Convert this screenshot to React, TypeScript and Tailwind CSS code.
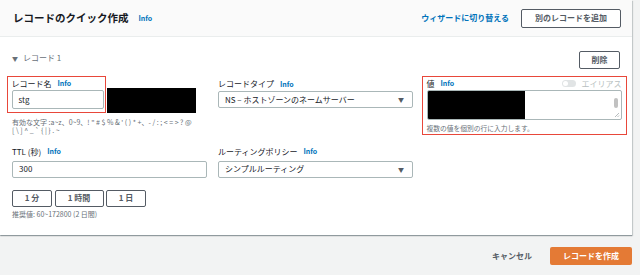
const font = { fontFamily: '"Noto Sans CJK JP", "Noto Sans", sans-serif' };

function Info() {
	return <span className="ml-[6px] text-[7px] font-bold text-[#0073bb]">Info</span>;
}

function SelectBox({ value }: { value: string }) {
	return (
		<div className="flex h-[17px] items-center justify-between rounded-[2px] border border-[#aab7b8] bg-white pl-[6px] pr-[8px]">
			<span className="text-[8px] text-[#16191f]">{value}</span>
			<span className="text-[6px] text-[#545b64]">▼</span>
		</div>
	);
}

function SmallButton({ label, w }: { label: string; w: string }) {
	return (
		<button
			className={`${w} h-[17px] rounded-[2px] border border-[#545b64] bg-white text-[8px] font-bold text-[#545b64]`}
		>
			{label}
		</button>
	);
}

export default function App() {
	return (
		<div style={font} className="h-[275px] w-[640px] overflow-hidden bg-[#f2f3f3]">
			<div className="w-[632px] bg-white shadow-[0_1px_1px_0_rgba(0,28,36,0.3),1px_1px_1px_0_rgba(0,28,36,0.15)]">
				{/* header */}
				<div className="flex h-[37px] items-center justify-between border-b border-[#eaeded] bg-[#fafafa] pl-[13px] pr-[11px]">
					<div className="flex items-center">
						<span className="text-[10.5px] font-bold text-[#16191f]">レコードのクイック作成</span>
						<span className="ml-[10px] text-[7px] font-bold text-[#0073bb]">Info</span>
					</div>
					<div className="flex items-center">
						<span className="text-[8px] font-bold text-[#0073bb]">ウィザードに切り替える</span>
						<button className="ml-[12px] h-[19px] w-[100px] rounded-[2px] border border-[#545b64] bg-white text-[8px] font-bold text-[#545b64]">
							別のレコードを追加
						</button>
					</div>
				</div>

				<div className="pb-[16px] pl-[12px] pr-[5px] pt-[14px]">
					{/* record row */}
					<div className="flex items-start justify-between pr-[7px]">
						<div className="mt-[1px] flex items-center text-[8px] text-[#687078]">
							<span className="text-[6px]">▼</span>
							<span className="ml-[5px]">レコード 1</span>
						</div>
						<button className="h-[18px] w-[41px] rounded-[2px] border border-[#545b64] bg-white text-[8px] font-bold text-[#545b64]">
							削除
						</button>
					</div>

					{/* fields row */}
					<div className="mt-[7px] flex items-start">
						<div className="-ml-[5px] w-[200px]">
							<div className="flex items-end">
								<div className="w-[99px] border-[1.5px] border-[#e8473a] pb-[3px] pl-[3.5px] pr-[1.5px]">
									<div className="flex h-[13px] items-center text-[8px] text-[#16191f]">
										レコード名
										<Info />
									</div>
									<div className="flex h-[19px] items-center rounded-[2px] border border-[#aab7b8] bg-white px-[6px] text-[8px] text-[#16191f]">
										stg
									</div>
								</div>
								<div className="ml-[1px] h-[25px] w-[89px] bg-black" />
							</div>
							<p className="ml-[5px] mt-[4.5px] whitespace-nowrap text-[7px] leading-[8px] text-[#687078]">
								有効な文字 :a~z、0~9、! " # $ % &amp; ' ( ) * +、- / : ; &lt; = &gt; ? @
								<br />[ \ ] ^ _ ` {"{"} | {"}"} . ~
							</p>
						</div>

						<div className="ml-[11px] w-[195px] pt-[1.5px]">
							<div className="flex h-[13px] items-center text-[8px] text-[#16191f]">
								レコードタイプ
								<Info />
							</div>
							<div className="mt-[0.5px]">
								<SelectBox value="NS – ホストゾーンのネームサーバー" />
							</div>
						</div>

						<div className="ml-[9px] w-[205px] border-[1.5px] border-[#e8473a] pb-[1.5px] pl-[3.5px] pr-[4.5px]">
							<div className="flex h-[13px] items-center justify-between text-[8px]">
								<div className="flex items-center text-[#16191f]">
									値
									<Info />
								</div>
								<div className="flex items-center">
									<div className="flex h-[7px] w-[14px] items-center rounded-full bg-[#e1e4e5] px-[1px]">
										<div className="h-[5px] w-[5px] rounded-full bg-white" />
									</div>
									<span className="ml-[6px] text-[#b8bfc1]">エイリアス</span>
								</div>
							</div>
							<div className="relative flex h-[30px] overflow-hidden rounded-[2px] border border-[#aab7b8] bg-white">
								<div className="h-full w-[97px] bg-black" />
								<div className="absolute right-[3px] top-[7px] h-[10px] w-[4px] rounded-full bg-[#c1c1c1]" />
								<svg className="absolute bottom-[1px] right-[1px]" width="6" height="6" viewBox="0 0 6 6">
									<path d="M5 1 L1 5 M5 3.5 L3.5 5" stroke="#9aa0a3" strokeWidth="0.7" />
								</svg>
							</div>
							<p className="mt-[4px] text-[6.75px] leading-[8px] text-[#687078]">
								複数の値を個別の行に入力します。
							</p>
						</div>
					</div>

					{/* ttl row */}
					<div className="mt-[10.5px] flex items-start">
						<div className="w-[195px]">
							<div className="flex h-[13px] items-center text-[8px] text-[#16191f]">
								TTL (秒)
								<Info />
							</div>
							<div className="mt-[2.5px] flex h-[17px] items-center rounded-[2px] border border-[#aab7b8] bg-white px-[6px] text-[8px] text-[#16191f]">
								300
							</div>
							<div className="mt-[12px] flex gap-[2.5px]">
								<SmallButton label="1 分" w="w-[40px]" />
								<SmallButton label="1 時間" w="w-[49px]" />
								<SmallButton label="1 日" w="w-[40px]" />
							</div>
							<p className="mt-[3.5px] text-[7px] leading-[9px] text-[#687078]">推奨値: 60~172800 (2 日間)</p>
						</div>
						<div className="ml-[11px] w-[195px]">
							<div className="flex h-[13px] items-center text-[8px] text-[#16191f]">
								ルーティングポリシー
								<Info />
							</div>
							<div className="mt-[2.5px]">
								<SelectBox value="シンプルルーティング" />
							</div>
						</div>
					</div>
				</div>
			</div>

			{/* footer */}
			<div className="mt-[12px] flex w-[632px] items-center justify-end">
				<span className="mr-[18px] text-[8px] font-bold text-[#545b64]">キャンセル</span>
				<button className="h-[18px] w-[82px] rounded-[2px] bg-[#e47a35] text-[8px] font-bold text-white">
					レコードを作成
				</button>
			</div>
		</div>
	);
}
